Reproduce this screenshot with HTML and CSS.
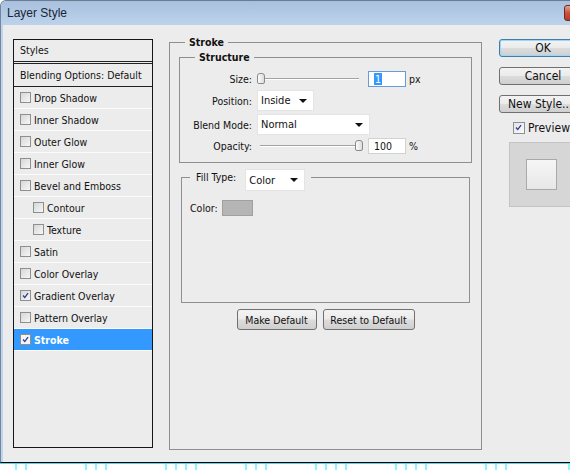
FILE: index.html
```html
<!DOCTYPE html>
<html>
<head>
    <title>Layer Style</title>
    <link rel="stylesheet" href="styles.css">
</head>
<body>
    <div class="window">
        <div class="titlebar">
            <span class="title">Layer Style</span>
            <span class="close"></span>
        </div>

        <div class="dialog">
            <div class="styles-list">
                <div class="list-head">Styles</div>
                <div class="list-blend">Blending Options: Default</div>
                <div class="item"><span class="cb"></span>Drop Shadow</div>
                <div class="item"><span class="cb"></span>Inner Shadow</div>
                <div class="item"><span class="cb"></span>Outer Glow</div>
                <div class="item"><span class="cb"></span>Inner Glow</div>
                <div class="item"><span class="cb"></span>Bevel and Emboss</div>
                <div class="item sub"><span class="cb"></span>Contour</div>
                <div class="item sub"><span class="cb"></span>Texture</div>
                <div class="item"><span class="cb"></span>Satin</div>
                <div class="item"><span class="cb"></span>Color Overlay</div>
                <div class="item"><span class="cb"><svg viewBox="0 0 11 11"><path d="M2.5 5.5 L4.6 8 L8.6 2.6"/></svg></span>Gradient Overlay</div>
                <div class="item"><span class="cb"></span>Pattern Overlay</div>
                <div class="item selected"><span class="cb"><svg viewBox="0 0 11 11"><path d="M2.5 5.5 L4.6 8 L8.6 2.6"/></svg></span>Stroke</div>
            </div>

            <fieldset class="group stroke">
                <legend>Stroke</legend>

                <fieldset class="group structure">
                    <legend>Structure</legend>
                    <div class="form-grid">
                        <label>Size:</label>
                        <div class="ctl">
                            <div class="slider"><span class="thumb"></span></div>
                            <span class="num focused"><span class="sel">1</span></span>
                            <span class="unit">px</span>
                        </div>

                        <label>Position:</label>
                        <div class="ctl">
                            <span class="dropdown pos">Inside<i class="arrow"></i></span>
                        </div>

                        <label>Blend Mode:</label>
                        <div class="ctl">
                            <span class="dropdown blend">Normal<i class="arrow"></i></span>
                        </div>

                        <label>Opacity:</label>
                        <div class="ctl">
                            <div class="slider"><span class="thumb at-end"></span></div>
                            <span class="num">100</span>
                            <span class="unit">%</span>
                        </div>
                    </div>
                </fieldset>

                <fieldset class="group fill">
                    <legend>
                        <span class="fill-label">Fill Type:</span>
                        <span class="dropdown fill-type">Color<i class="arrow"></i></span>
                    </legend>
                    <div class="fill-body">
                        <span>Color:</span>
                        <span class="swatch"></span>
                    </div>
                </fieldset>

                <div class="actions">
                    <button class="btn make">Make Default</button>
                    <button class="btn reset">Reset to Default</button>
                </div>
            </fieldset>

            <div class="side">
                <button class="btn big default">OK</button>
                <button class="btn big">Cancel</button>
                <button class="btn big new">New Style...</button>
                <div class="preview-check">
                    <span class="cb"><svg viewBox="0 0 11 11"><path d="M2.5 5.5 L4.6 8 L8.6 2.6"/></svg></span>Preview
                </div>
                <div class="preview-box"><div class="preview-swatch"></div></div>
            </div>
        </div>
    </div>

    <div class="ruler">
        <svg width="570" height="6">
            <g fill="#8ff4ff">
                <rect x="15" y="0" width="2" height="6"/>
                <rect x="25" y="0" width="2" height="6"/>
                <rect x="85" y="0" width="2" height="6"/>
                <rect x="95" y="0" width="2" height="6"/>
                <rect x="105" y="0" width="2" height="6"/>
                <rect x="165" y="0" width="2" height="6"/>
                <rect x="175" y="0" width="2" height="6"/>
                <rect x="185" y="0" width="2" height="6"/>
                <rect x="195" y="0" width="2" height="6"/>
                <rect x="245" y="0" width="2" height="6"/>
                <rect x="255" y="0" width="2" height="6"/>
                <rect x="265" y="0" width="2" height="6"/>
                <rect x="315" y="0" width="2" height="6"/>
                <rect x="325" y="0" width="2" height="6"/>
                <rect x="335" y="0" width="2" height="6"/>
                <rect x="345" y="0" width="2" height="6"/>
                <rect x="395" y="0" width="2" height="6"/>
                <rect x="405" y="0" width="2" height="6"/>
                <rect x="415" y="0" width="2" height="6"/>
                <rect x="425" y="0" width="2" height="6"/>
                <rect x="485" y="0" width="2" height="6"/>
                <rect x="495" y="0" width="2" height="6"/>
                <rect x="505" y="0" width="2" height="6"/>
                <rect x="568" y="0" width="2" height="6"/>
            </g>
        </svg>
    </div>
</body>
</html>
```

FILE: styles.css
```css
html, body {
    margin: 0;
    overflow: hidden;
}
body {
    background-color: #fff;
    font-family: "DejaVu Sans Condensed", "DejaVu Sans", sans-serif;
    font-stretch: condensed;
    font-size: 10.5px;
    color: #111;
}
.window {
    width: 620px;
    border-top: 1px solid #6b7b90;
    border-left: 1px solid #74869d;
    border-bottom: 1px solid #000;
    border-top-left-radius: 6px;
    background-color: #c0d5ec;
}
.titlebar {
    height: 24px;
    display: flex;
    align-items: center;
    padding-left: 6px;
    border-top-left-radius: 5px;
    background: linear-gradient(#a8c0dd, #bdd3ec);
}
.title {
    font-family: "Liberation Sans", sans-serif;
    font-stretch: normal;
    font-size: 12px;
    color: #1b2535;
}
.close {
    width: 40px;
    height: 14px;
    margin-left: auto;
    margin-right: 15px;
    border: 1px solid #6a2b22;
    border-radius: 3px;
    background: linear-gradient(#e3a597, #c9503f 50%, #b73a28);
}
.dialog {
    height: 437px;
    margin-left: 2px;
    padding: 14px 0 0 10px;
    box-sizing: border-box;
    display: flex;
    align-items: flex-start;
    background-color: #ececec;
}

/* left list */
.styles-list {
    width: 140px;
    height: 409px;
    box-sizing: border-box;
    border: 1px solid #161616;
    margin-right: 16px;
}
.list-head {
    height: 21px;
    line-height: 21px;
    padding-left: 6px;
    border-bottom: 1px solid #222;
}
.list-blend {
    height: 22px;
    line-height: 22px;
    padding-left: 6px;
    margin-top: 1px;
    border-top: 1px solid #222;
    border-bottom: 1px solid #222;
}
.item {
    height: 21px;
    display: flex;
    align-items: center;
    padding-left: 6px;
    border-bottom: 1px solid #fbfbfb;
}
.item.sub {
    padding-left: 19px;
}
.item.selected {
    background-color: #3399ff;
    color: #fff;
    font-weight: bold;
}
.cb {
    width: 11px;
    height: 11px;
    box-sizing: border-box;
    margin-right: 3px;
    border: 1px solid #8e8f8f;
    background: linear-gradient(135deg, #d6d6d6, #f7f7f7);
    display: inline-flex;
}
.cb svg {
    width: 9px;
    height: 9px;
}
.cb path {
    fill: none;
    stroke: #2b3b98;
    stroke-width: 1.6;
}
.item.selected .cb {
    background: #f4f4f4;
}

/* group boxes */
.group {
    margin: 0;
    border: 1px solid #8f8f8f;
    min-width: 0;
}
.group legend {
    padding: 0 4px;
    font-weight: bold;
    line-height: 13px;
}
.stroke {
    width: 313px;
    height: 414px;
    box-sizing: border-box;
    padding: 0 9px;
    margin: -3px 17px 0 0;
}
.stroke > legend {
    margin-left: 6px;
}
.structure {
    padding: 0 0 8px 0;
    margin-top: 2px;
}
.structure > legend {
    margin-left: 15px;
}
.form-grid {
    display: grid;
    grid-template-columns: 72px auto;
    grid-template-rows: 17px 21px 21px 16px;
    column-gap: 5px;
    row-gap: 3px;
    align-items: center;
    padding-top: 6px;
}
.form-grid label {
    text-align: right;
}
.ctl {
    display: flex;
    align-items: center;
    height: 100%;
}
.slider {
    width: 106px;
    height: 12px;
    margin-right: 5px;
    display: flex;
    background-image: linear-gradient(#a3a3a3, #a3a3a3), linear-gradient(#fff, #fff);
    background-size: 99px 1px, 99px 1px;
    background-position: 3px 5px, 3px 6px;
    background-repeat: no-repeat;
}
.thumb {
    width: 8px;
    height: 11px;
    box-sizing: border-box;
    border: 1px solid #8a8a8a;
    border-radius: 3px 3px 2px 2px;
    background: linear-gradient(90deg, #fdfdfd, #dcdcdc);
}
.thumb.at-end {
    margin-left: 98px;
}
.num {
    width: 38px;
    height: 16px;
    box-sizing: border-box;
    border: 1px solid #d2d2d2;
    background-color: #fff;
    padding-left: 5px;
    line-height: 14px;
}
.num.focused {
    border-color: #6a9bd8;
}
.sel {
    background-color: #3399ff;
    color: #fff;
    padding: 0 1px;
}
.unit {
    margin-left: 3px;
}
.dropdown {
    height: 21px;
    box-sizing: border-box;
    display: inline-flex;
    align-items: center;
    justify-content: space-between;
    padding: 0 6px 0 3px;
    background-color: #fff;
    border: 1px solid #e4e4e4;
    font-weight: normal;
    font-size: 11px;
}
.dropdown.pos {
    width: 57px;
}
.dropdown.blend {
    width: 113px;
}
.arrow {
    width: 0;
    height: 0;
    border-left: 4px solid transparent;
    border-right: 4px solid transparent;
    border-top: 4px solid #111;
}

/* fill type */
.fill {
    margin: 6px 2px 0;
    padding: 0;
}
.fill > legend {
    margin-left: 8px;
    padding: 0 6px;
    display: flex;
    align-items: flex-start;
    font-weight: normal;
}
.fill-label {
    padding-top: 2px;
    margin-right: 9px;
}
.dropdown.fill-type {
    width: 60px;
    height: 22px;
    margin-bottom: -6px;
}
.fill-body {
    height: 117px;
    box-sizing: border-box;
    padding: 15px 0 0 8px;
    display: flex;
    align-items: flex-start;
    gap: 4px;
}
.fill-body span:first-child {
    line-height: 16px;
}
.swatch {
    width: 31px;
    height: 16px;
    box-sizing: border-box;
    border: 1px solid #a0a0a0;
    background-color: #b5b5b5;
}
.actions {
    display: flex;
    justify-content: center;
    gap: 6px;
    margin-top: 6px;
}

/* buttons */
.btn {
    height: 21px;
    padding: 0;
    border: 1px solid #707070;
    border-radius: 3px;
    background: linear-gradient(#f3f3f3, #ebebeb 48%, #dcdcdc 52%, #cfcfcf);
    font-family: inherit;
    font-stretch: condensed;
    font-size: 10.5px;
    color: #111;
}
.btn.make {
    width: 80px;
}
.btn.reset {
    width: 92px;
}

/* right column */
.side {
    display: flex;
    flex-direction: column;
    width: 90px;
}
.btn.big {
    width: 88px;
    height: 18px;
    font-size: 12px;
    margin-bottom: 10px;
    line-height: 14px;
}
.btn.default {
    border-color: #3c7fb1;
    box-shadow: inset 0 0 0 1px #9fd4f2;
}
.btn.new {
    text-align: left;
    padding-left: 8px;
    margin-bottom: 8px;
}
.preview-check {
    display: flex;
    align-items: center;
    height: 13px;
    margin-left: 14px;
    font-size: 12px;
}
.preview-check .cb {
    width: 12px;
    height: 12px;
    background: linear-gradient(135deg, #e4e4e4, #fafafa);
}
.preview-box {
    width: 65px;
    height: 65px;
    box-sizing: border-box;
    margin: 8px 0 0 10px;
    border: 1px solid #c4c4c4;
    background-color: #d6d6d6;
    display: flex;
    align-items: center;
    justify-content: center;
}
.preview-swatch {
    width: 31px;
    height: 31px;
    box-sizing: border-box;
    border: 1px solid #a9a9a9;
    background: linear-gradient(#f6f6f6, #e7e7e7);
}

/* bottom ruler */
.ruler {
    border-top: 1px solid #56d4ea;
    height: 6px;
}
.ruler svg {
    display: block;
}
```
